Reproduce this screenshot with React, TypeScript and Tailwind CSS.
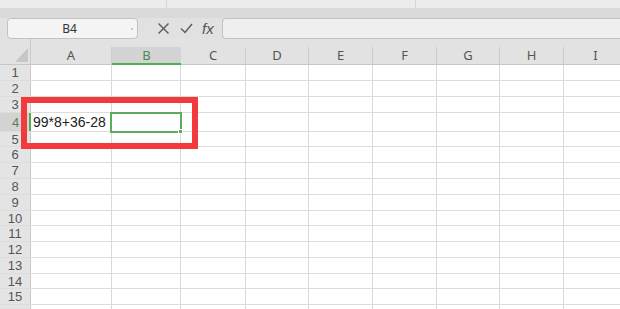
import React from 'react'

const columns = [
  { name: 'A', width: 81 },
  { name: 'B', width: 69 },
  { name: 'C', width: 65 },
  { name: 'D', width: 63 },
  { name: 'E', width: 64 },
  { name: 'F', width: 64 },
  { name: 'G', width: 63 },
  { name: 'H', width: 64 },
  { name: 'I', width: 64 },
]

// row heights in px, tuned to the sheet zoom
const rows = [16, 16, 16, 19, 15, 16, 16, 16, 16, 15, 16, 16, 16, 15, 16, 16]

function CornerCell() {
  return (
    <div className="relative w-[31px] shrink-0 border-r border-[#c9c9c9]">
      <svg className="absolute left-[15px] top-[9px]" width="13" height="14" viewBox="0 0 13 14">
        <polygon points="13,0 13,14 0,14" fill="#c6c6c6" />
      </svg>
    </div>
  )
}

function FormulaBar() {
  return (
    <div className="flex h-[21px] items-center bg-[#e1e1e1]">
      <div className="relative ml-[7px] flex h-[21px] w-[131px] items-center justify-center rounded-[4px] border border-[#c2c2c2] bg-[#f4f4f4] pr-[6px] text-[12px] leading-none text-[#333]">
        B4
        <span className="absolute right-[4px] top-[9px] h-[2px] w-[2px] bg-[#c8c8c8]" />
      </div>
      <div className="ml-[19px] flex items-center">
        <svg width="13" height="13" viewBox="0 0 13 13">
          <path d="M1.5 1.5 L11.5 11.5 M11.5 1.5 L1.5 11.5" stroke="#595959" strokeWidth="1.4" fill="none" />
        </svg>
        <svg className="ml-[10px]" width="13" height="11" viewBox="0 0 13 11">
          <path d="M1 5.5 L5 9.5 L12 1" stroke="#595959" strokeWidth="1.4" fill="none" />
        </svg>
        <span className="ml-[9px] font-['Liberation_Sans',sans-serif] text-[15px] italic leading-none text-[#555]">fx</span>
      </div>
      <div className="ml-[8px] h-[21px] flex-1 rounded-l-[4px] border border-r-0 border-[#c2c2c2] bg-[#efefef]" />
    </div>
  )
}

export default function App() {
  return (
    <div className="relative h-[309px] w-[620px] overflow-hidden bg-white font-['Noto_Sans',sans-serif]">
      {/* tab strip */}
      <div className="flex h-[8px] bg-[#ececec]">
        <div className="w-[167px] border-r border-[#d6d6d6]" />
        <div className="w-[249px] border-r border-[#d6d6d6]" />
        <div className="flex-1" />
      </div>
      <div className="h-[10px] bg-[#dadada]" />

      <FormulaBar />

      {/* column headers */}
      <div className="flex h-[26px] border-b border-[#c6c6c6] bg-[#e2e2e2]">
        <CornerCell />
        {columns.map((col) => (
          <div
            key={col.name}
            className={
              col.name === 'B'
                ? 'relative mt-[8px] flex shrink-0 items-center justify-center bg-[#d3d3d3] text-[13px] leading-none text-[#4f8a4f]'
                : 'mt-[8px] flex shrink-0 items-center justify-center border-r border-[#cdcdcd] text-[13px] leading-none text-[#555]'
            }
            style={{ width: col.width }}
          >
            {col.name}
            {col.name === 'B' && <span className="absolute bottom-[-1px] left-0 right-0 h-[2px] bg-[#4caf50]" />}
          </div>
        ))}
      </div>

      {/* grid */}
      {rows.map((h, i) => {
        const selected = i === 3
        return (
          <div key={i} className="flex border-b border-[#dcdcdc]" style={{ height: h }}>
            <div
              className={
                selected
                  ? "relative flex w-[31px] shrink-0 items-center justify-center bg-[#d3d3d3] font-['Liberation_Sans',sans-serif] text-[13px] leading-none text-[#5e7d5e]"
                  : "flex w-[31px] shrink-0 items-center justify-center border-r border-[#c9c9c9] bg-[#e4e4e4] font-['Liberation_Sans',sans-serif] text-[13px] leading-none text-[#555]"
              }
            >
              {/* row 16 is only a sliver at the bottom edge */}
              {i < 15 ? i + 1 : null}
              {selected && <span className="absolute bottom-0 right-0 top-0 w-[2px] bg-[#4caf50]" />}
            </div>
            {columns.map((col, j) => (
              <div
                key={col.name}
                className="flex shrink-0 items-center border-r border-[#d9d9d9]"
                style={{ width: col.width }}
              >
                {selected && j === 0 && (
                  <span className="whitespace-nowrap pl-[2px] font-['Liberation_Sans',sans-serif] text-[14px] leading-none text-[#222]">
                    99*8+36-28
                  </span>
                )}
              </div>
            ))}
          </div>
        )
      })}

      {/* active cell B4 */}
      <div className="absolute left-[110px] top-[112px] h-[21px] w-[72px] border-2 border-[#5aad5a]" />
      <div className="absolute left-[178px] top-[129px] h-[5px] w-[5px] border border-white bg-[#5aad5a]" />

      {/* annotation box */}
      <div className="absolute left-[21px] top-[97px] h-[52px] w-[177px] border-[6px] border-[#f2393b]" />
    </div>
  )
}
